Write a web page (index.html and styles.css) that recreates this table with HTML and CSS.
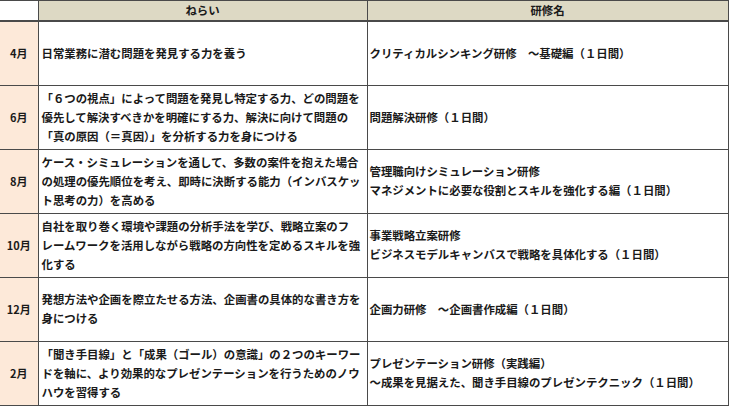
FILE: index.html
```html
<!DOCTYPE html>
<html lang="ja">
<head>
<meta charset="utf-8">
<title>研修計画</title>
<link rel="stylesheet" href="styles.css">
</head>
<body>
<table class="plan">
  <colgroup>
    <col class="c-month">
    <col class="c-aim">
    <col class="c-name">
  </colgroup>
  <thead>
    <tr>
      <th class="corner"></th>
      <th class="head">ねらい</th>
      <th class="head">研修名</th>
    </tr>
  </thead>
  <tbody>
    <tr>
      <th class="month">4月</th>
      <td class="aim">日常業務に潜む問題を発見する力を養う</td>
      <td class="name">クリティカルシンキング研修　～基礎編（１日間）</td>
    </tr>
    <tr>
      <th class="month">6月</th>
      <td class="aim">「６つの視点」によって問題を発見し特定する力、どの問題を<br>優先して解決すべきかを明確にする力、解決に向けて問題の<br>「真の原因（＝真因）」を分析する力を身につける</td>
      <td class="name">問題解決研修（１日間）</td>
    </tr>
    <tr>
      <th class="month">8月</th>
      <td class="aim">ケース・シミュレーションを通して、多数の案件を抱えた場合<br>の処理の優先順位を考え、即時に決断する能力（インバスケッ<br>ト思考の力）を高める</td>
      <td class="name">管理職向けシミュレーション研修<br>マネジメントに必要な役割とスキルを強化する編（１日間）</td>
    </tr>
    <tr>
      <th class="month">10月</th>
      <td class="aim">自社を取り巻く環境や課題の分析手法を学び、戦略立案のフ<br>レームワークを活用しながら戦略の方向性を定めるスキルを強<br>化する</td>
      <td class="name">事業戦略立案研修<br>ビジネスモデルキャンバスで戦略を具体化する（１日間）</td>
    </tr>
    <tr>
      <th class="month">12月</th>
      <td class="aim">発想方法や企画を際立たせる方法、企画書の具体的な書き方を<br>身につける</td>
      <td class="name">企画力研修　～企画書作成編（１日間）</td>
    </tr>
    <tr>
      <th class="month">2月</th>
      <td class="aim">「聞き手目線」と「成果（ゴール）の意識」の２つのキーワー<br>ドを軸に、より効果的なプレゼンテーションを行うためのノウ<br>ハウを習得する</td>
      <td class="name">プレゼンテーション研修（実践編）<br>～成果を見据えた、聞き手目線のプレゼンテクニック（１日間）</td>
    </tr>
  </tbody>
</table>
</body>
</html>
```
FILE: styles.css
```css
html, body {
  margin: 0;
  padding: 0;
  background: #ffffff;
}

body {
  font-family: "Noto Sans CJK JP", "Noto Sans", sans-serif;
  color: #1a1a1a;
}

.plan {
  border-collapse: collapse;
  table-layout: fixed;
  width: 728px;
  font-size: 11.4px;
  font-weight: 700;
}

.c-month { width: 38px; }
.c-aim { width: 329px; }
.c-name { width: 361px; }

.plan th,
.plan td {
  border: 1px solid #4a4a4a;
  padding: 0;
  vertical-align: middle;
  line-height: 19px;
  white-space: nowrap;
  overflow: hidden;
}

.plan tr > :first-child {
  border-left: none;
}

.plan thead tr {
  height: 20px;
}

.plan thead th {
  border-bottom: 2px solid #4a4a4a;
}

.plan tbody tr {
  height: 64px;
}

.corner {
  background: #ffffff;
}

.head {
  background: #ddd9c4;
  text-align: center;
  line-height: 18px;
}

.month {
  background: #fde9d9;
  text-align: center;
  font-size: 11px;
}

.aim {
  padding-left: 3px !important;
  text-align: left;
}

.name {
  padding-left: 2px !important;
  text-align: left;
}
```
